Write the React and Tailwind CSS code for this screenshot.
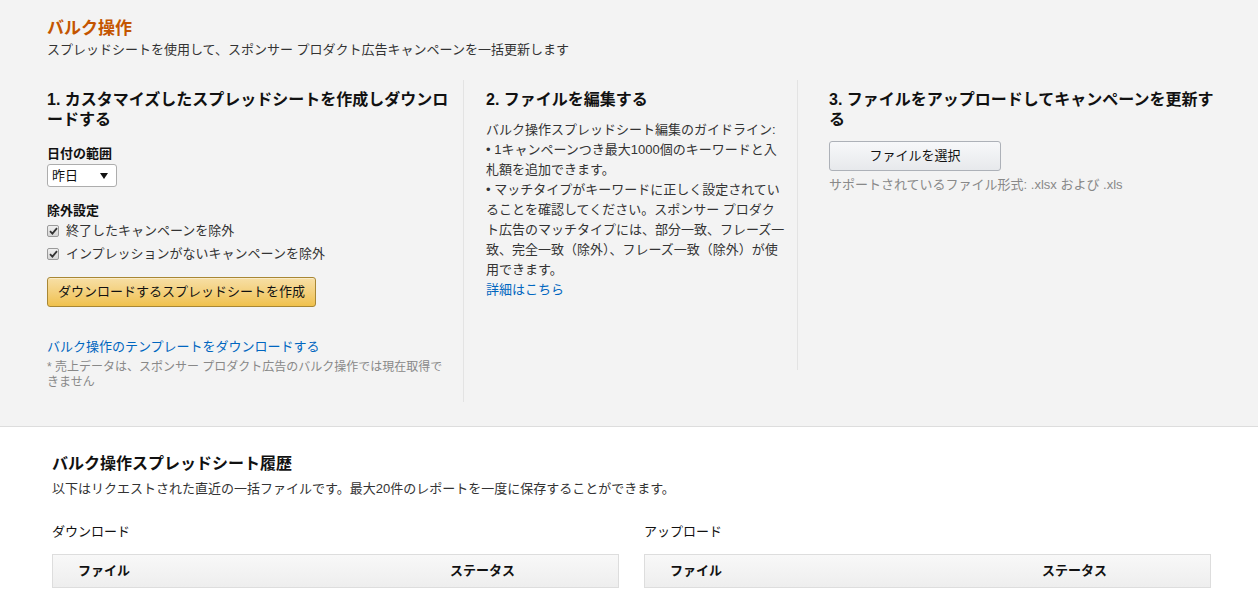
import React from "react";

function CheckRow({ label }) {
  return (
    <div className="flex items-center h-[23px]">
      <span className="w-[12px] h-[12px] border border-[#9a9a9a] rounded-[2px] bg-linear-to-b from-[#f0f0f0] to-[#d6d6d6] flex items-center justify-center">
        <svg width="9" height="8" viewBox="0 0 9 8">
          <path d="M1 4.2 L3.4 6.6 L8 1.2" fill="none" stroke="#333" strokeWidth="1.8" />
        </svg>
      </span>
      <span className="ml-[7px] text-[13px] text-[#333]">{label}</span>
    </div>
  );
}

function HistoryTable({ title }) {
  return (
    <div>
      <div className="text-[13px] leading-[19px] text-[#111]">{title}</div>
      <div className="mt-[13px] h-[34px] flex items-center border border-[#ddd] bg-linear-to-b from-[#f8f8f8] to-[#eeeeee] text-[13px] font-bold text-[#111]">
        <div className="w-[372px] pl-[25px]">ファイル</div>
        <div className="pl-[25px]">ステータス</div>
      </div>
    </div>
  );
}

export default function App() {
  return (
    <div className="min-h-[603px] bg-white text-[#333] font-['Liberation_Sans','Noto_Sans_CJK_JP',sans-serif]">
      <div className="bg-[#f3f3f3] border-b border-[#ddd] pl-[47px] pt-[18px] pb-[24px]">
        <h1 className="text-[17px] leading-[22px] font-bold text-[#c45500]">バルク操作</h1>
        <p className="text-[13px] leading-[19px] text-[#333]">
          スプレッドシートを使用して、スポンサー プロダクト広告キャンペーンを一括更新します
        </p>

        <div className="flex items-start mt-[21px]">
          <div className="w-[417px] pr-[12px] pt-[10px] pb-[12px] border-r border-[#e3e3e3]">
            <h2 className="text-[16px] leading-[20px] font-bold text-[#111]">
              1. カスタマイズしたスプレッドシートを作成しダウンロードする
            </h2>
            <div className="mt-[14px] text-[13px] leading-[19px] font-bold text-[#111]">日付の範囲</div>
            <div className="mt-[1px] w-[70px] h-[23px] border border-[#adadad] rounded-[3px] bg-white flex items-center justify-between pl-[4px] pr-[8px] text-[13px] text-[#111]">
              <span>昨日</span>
              <svg width="8" height="6" viewBox="0 0 8 6">
                <path d="M0 0 H8 L4 6 Z" fill="#111" />
              </svg>
            </div>
            <div className="mt-[14px] text-[13px] leading-[19px] font-bold text-[#111]">除外設定</div>
            <div className="-mt-px">
              <CheckRow label="終了したキャンペーンを除外" />
              <CheckRow label="インプレッションがないキャンペーンを除外" />
            </div>
            <button className="mt-[12px] h-[30px] w-[269px] border border-[#a88734] rounded-[3px] bg-linear-to-b from-[#f7dfa5] to-[#f0c14b] text-[13px] text-[#111] shadow-[inset_0_1px_0_rgba(255,255,255,0.4)]">
              ダウンロードするスプレッドシートを作成
            </button>
            <div className="mt-[30px] text-[13px] leading-[19px] text-[#0066c0]">
              バルク操作のテンプレートをダウンロードする
            </div>
            <p className="mt-[4px] text-[12px] leading-[15px] text-[#888]">
              * 売上データは、スポンサー プロダクト広告のバルク操作では現在取得できません
            </p>
          </div>

          <div className="w-[334px] pl-[22px] pr-[12px] pt-[10px] pb-[70px] border-r border-[#e3e3e3]">
            <h2 className="text-[16px] leading-[20px] font-bold text-[#111]">2. ファイルを編集する</h2>
            <div className="mt-[10px] text-[13px] leading-[20px] text-[#333]">
              <p>バルク操作スプレッドシート編集のガイドライン:</p>
              <p>• 1キャンペーンつき最大1000個のキーワードと入札額を追加できます。</p>
              <p>
                • マッチタイプがキーワードに正しく設定されていることを確認してください。スポンサー プロダクト広告のマッチタイプには、部分一致、フレーズ一致、完全一致（除外）、フレーズ一致（除外）が使用できます。
              </p>
              <p className="text-[#0066c0]">詳細はこちら</p>
            </div>
          </div>

          <div className="w-[423px] pl-[31px] pt-[10px]">
            <h2 className="text-[16px] leading-[20px] font-bold text-[#111]">
              3. ファイルをアップロードしてキャンペーンを更新する
            </h2>
            <button className="mt-[11px] h-[30px] w-[172px] border border-[#adb1b8] rounded-[3px] bg-linear-to-b from-[#f7f8fa] to-[#e7e9ec] text-[13px] text-[#111]">
              ファイルを選択
            </button>
            <p className="mt-[4px] text-[13px] leading-[19px] text-[#888]">
              サポートされているファイル形式: .xlsx および .xls
            </p>
          </div>
        </div>
      </div>

      <div className="pl-[52px] pr-[47px] pt-[26px]">
        <h2 className="text-[16px] leading-[22px] font-bold text-[#111]">バルク操作スプレッドシート履歴</h2>
        <p className="mt-[4px] text-[13px] leading-[19px] text-[#333]">
          以下はリクエストされた直近の一括ファイルです。最大20件のレポートを一度に保存することができます。
        </p>
        <div className="mt-[24px] grid grid-cols-2 gap-[25px]">
          <HistoryTable title="ダウンロード" />
          <HistoryTable title="アップロード" />
        </div>
      </div>
    </div>
  );
}
